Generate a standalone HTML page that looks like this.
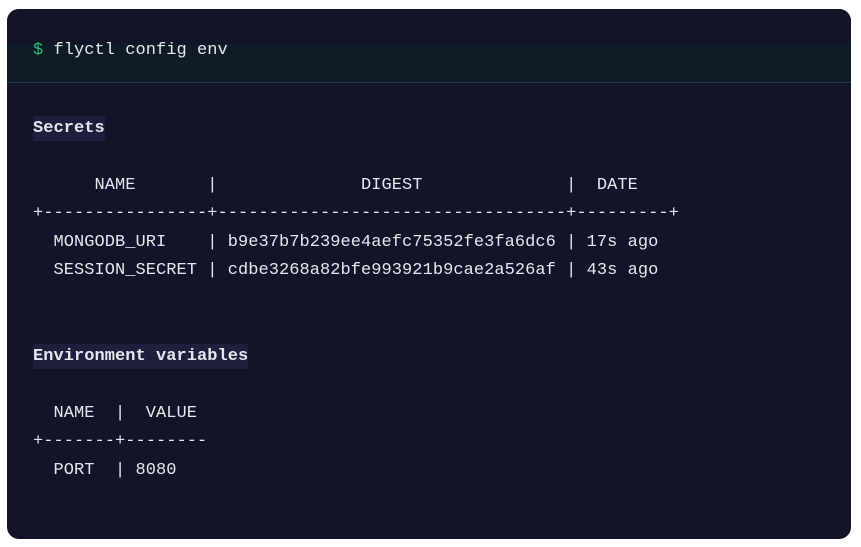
<!DOCTYPE html>
<html><head><style>
html,body{margin:0;padding:0;background:#fff;width:861px;height:547px;overflow:hidden}
.card{position:absolute;left:7px;top:9px;width:844px;height:530px;background:#121427;border-radius:12px;overflow:hidden}
.head{position:absolute;left:0;top:0;width:100%;height:73px;background:linear-gradient(#121427 0,#121427 35px,#0f1b26 35px);border-bottom:1px solid #2b3448}
.t{position:absolute;left:26px;font-family:"Liberation Mono",monospace;font-size:17px;letter-spacing:0.05px;color:#e6e7ee;white-space:pre;line-height:20px}
.g{color:#22c37a}
.b{font-weight:bold;background:#1f1f3d;padding:3px 0}
</style></head><body>
<div class="card">
<div class="head"></div>
<div class="t" style="top:32px"><span class="g">$</span> flyctl config env</div>
<div class="t" style="top:110px"><span class="b">Secrets</span></div>
<div class="t" style="top:167px">      NAME       |              DIGEST              |  DATE</div>
<div class="t" style="top:195px">+----------------+----------------------------------+---------+</div>
<div class="t" style="top:224px">  MONGODB_URI    | b9e37b7b239ee4aefc75352fe3fa6dc6 | 17s ago</div>
<div class="t" style="top:252px">  SESSION_SECRET | cdbe3268a82bfe993921b9cae2a526af | 43s ago</div>
<div class="t" style="top:338px"><span class="b">Environment variables</span></div>
<div class="t" style="top:395px">  NAME  |  VALUE</div>
<div class="t" style="top:423px">+-------+--------</div>
<div class="t" style="top:452px">  PORT  | 8080</div>
</div>
</body></html>
